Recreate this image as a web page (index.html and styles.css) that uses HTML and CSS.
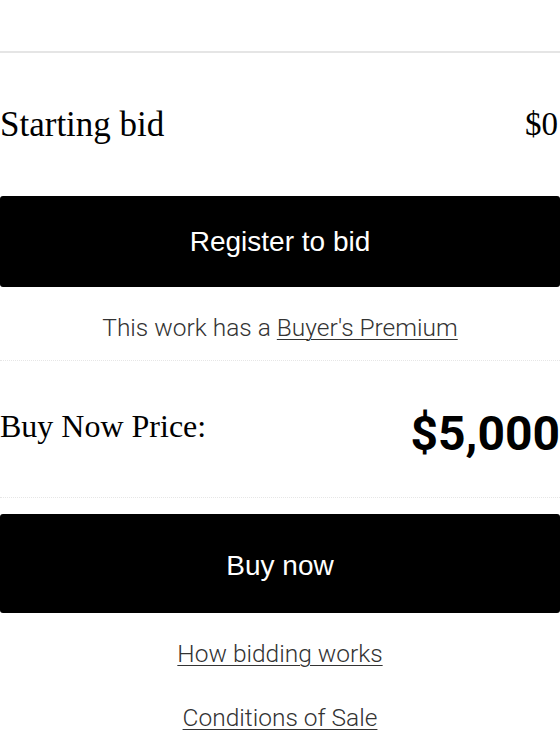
FILE: index.html
```html
<!DOCTYPE html>
<html>
<head>
<meta charset="utf-8">
<link rel="stylesheet" href="styles.css">
</head>
<body>
<div class="page">
  <div class="topbar"></div>
  <div class="row start-row">
    <span class="serif-label">Starting bid</span>
    <span class="serif-value">$0</span>
  </div>
  <a class="btn btn-register">Register to bid</a>
  <div class="premium">This work has a <a class="ulink">Buyer's Premium</a></div>
  <div class="row buy-row">
    <span class="serif-label buy-label">Buy Now Price:</span>
    <span class="price">$5,000</span>
  </div>
  <a class="btn btn-buy">Buy now</a>
  <div class="links">
    <a class="ulink link-item">How bidding works</a>
    <a class="ulink link-item">Conditions of Sale</a>
  </div>
</div>
</body>
</html>
```

FILE: styles.css
```css
html, body {
  margin: 0;
  padding: 0;
  background: #fff;
}
.page {
  width: 560px;
  display: flex;
  flex-direction: column;
}
.topbar {
  height: 51px;
  border-bottom: 2px solid #e5e5e5;
}
.row {
  display: flex;
  justify-content: space-between;
  align-items: center;
}
.start-row {
  height: 143px;
}
.serif-label {
  font-family: "Liberation Serif", serif;
  font-size: 35px;
  color: #000;
}
.buy-label {
  font-size: 32px;
  padding-bottom: 6px;
}
.serif-value {
  font-family: "Liberation Serif", serif;
  font-size: 33px;
  color: #000;
  padding-right: 2px;
}
.btn {
  display: flex;
  align-items: center;
  justify-content: center;
  background: #000;
  color: #fff;
  border-radius: 3px;
  font-family: "Liberation Sans", Arial, sans-serif;
  font-size: 28px;
}
.btn-register {
  height: 91px;
}
.premium {
  box-sizing: border-box;
  height: 74px;
  padding-top: 8px;
  display: flex;
  align-items: center;
  justify-content: center;
  font-family: Roboto, "Liberation Sans", sans-serif;
  font-weight: 300;
  font-size: 24.5px;
  color: #333;
  border-bottom: 1px dotted #e6e6e6;
}
.ulink {
  color: #333;
  text-decoration: underline;
  text-underline-offset: 3px;
  text-decoration-thickness: 1px;
  margin-left: 6px;
}
.buy-row {
  height: 136px;
  border-bottom: 1px dotted #e6e6e6;
}
.price {
  font-family: Roboto, "Liberation Sans", sans-serif;
  font-weight: 700;
  font-size: 48px;
  color: #000;
  padding-top: 8px;
}
.btn-buy {
  box-sizing: border-box;
  margin-top: 16px;
  height: 99px;
  padding-top: 4px;
}
.links {
  display: flex;
  flex-direction: column;
  align-items: center;
  padding-top: 27px;
  gap: 36px;
}
.link-item {
  margin-left: 0;
  font-family: Roboto, "Liberation Sans", sans-serif;
  font-weight: 300;
  font-size: 24.5px;
  line-height: 28px;
}
```
